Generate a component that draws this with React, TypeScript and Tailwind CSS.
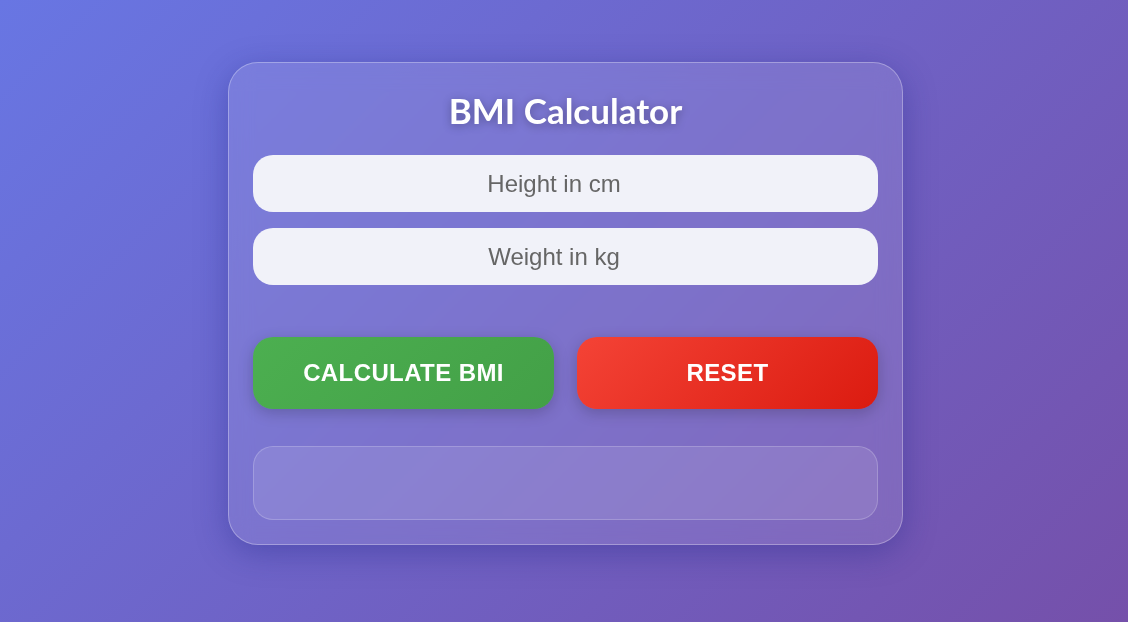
import { useState } from "react";

export default function App() {
  const [height, setHeight] = useState("");
  const [weight, setWeight] = useState("");
  const [result, setResult] = useState("");

  const calculate = () => {
    const h = parseFloat(height) / 100;
    const w = parseFloat(weight);
    if (!h || !w) {
      setResult("Please enter valid values");
      return;
    }
    setResult(`Your BMI is ${(w / (h * h)).toFixed(1)}`);
  };

  const reset = () => {
    setHeight("");
    setWeight("");
    setResult("");
  };

  return (
    <div className="min-h-screen w-full flex items-center justify-center pb-[15px] pl-[3px] bg-[linear-gradient(135deg,#6876e3_0%,#7550aa_100%)]">
      <div className="w-[675px] p-[24px] rounded-[30px] bg-white/10 border border-white/30 backdrop-blur-md shadow-[0_8px_32px_rgba(31,38,135,0.37)]">
        <h1 className="text-center text-white font-bold text-[35px] leading-[42px] mt-[2px] mb-[24px] font-['Lato','Open_Sans',sans-serif] [text-shadow:0_2px_10px_rgba(0,0,0,0.3)]">
          BMI Calculator
        </h1>

        {/* Inputs */}
        <div className="flex flex-col gap-4">
          <input
            type="number"
            value={height}
            onChange={(e) => setHeight(e.target.value)}
            placeholder="Height in cm"
            className="w-full h-[57px] pr-[8px] rounded-[20px] bg-[#f1f2f9] text-center text-[24px] text-[#333] placeholder:text-[#666] outline-none font-['Liberation_Sans','Arial',sans-serif]"
          />
          <input
            type="number"
            value={weight}
            onChange={(e) => setWeight(e.target.value)}
            placeholder="Weight in kg"
            className="w-full h-[57px] pr-[8px] rounded-[20px] bg-[#f1f2f9] text-center text-[24px] text-[#333] placeholder:text-[#666] outline-none font-['Liberation_Sans','Arial',sans-serif]"
          />
        </div>

        {/* Buttons */}
        <div className="grid grid-cols-2 gap-[23px] mt-[52px]">
          <button
            onClick={calculate}
            className="h-[72px] rounded-[20px] bg-[linear-gradient(135deg,#4caf50,#43a047)] text-white font-bold text-[24px] tracking-[0.4px] uppercase shadow-[0_4px_15px_rgba(0,0,0,0.2)] font-['Liberation_Sans','Arial',sans-serif]"
          >
            Calculate BMI
          </button>
          <button
            onClick={reset}
            className="h-[72px] rounded-[20px] bg-[linear-gradient(135deg,#f44336,#db1b10)] text-white font-bold text-[24px] tracking-[0.4px] uppercase shadow-[0_4px_15px_rgba(0,0,0,0.2)] font-['Liberation_Sans','Arial',sans-serif]"
          >
            Reset
          </button>
        </div>

        {/* Result */}
        <div className="mt-[37px] h-[74px] rounded-[20px] bg-white/10 border border-white/20 flex items-center justify-center text-white text-[22px] font-bold font-['Liberation_Sans','Arial',sans-serif]">
          {result}
        </div>
      </div>
    </div>
  );
}
